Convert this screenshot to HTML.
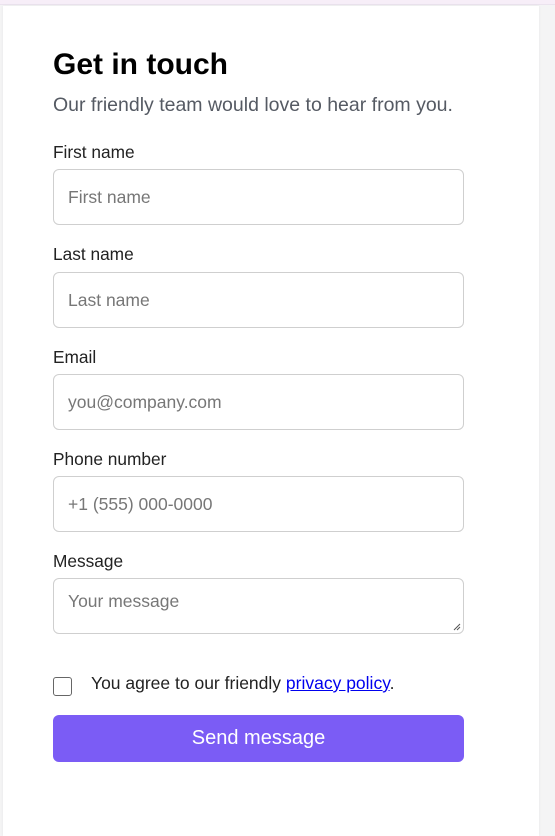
<!DOCTYPE html>
<html><head><style>
*{box-sizing:border-box;margin:0;padding:0}
body{width:555px;height:827px;background:#f4f4f5;font-family:"Liberation Sans",Arial,sans-serif;position:relative;overflow:hidden}
.top{position:absolute;left:0;top:0;width:555px;height:5px;background:#f7eef8;border-bottom:1px solid #ebe3ee}
.card{position:absolute;left:3px;top:6px;width:536px;height:830px;background:#fff;box-shadow:0 0 3px rgba(0,0,0,.06)}
.a{position:absolute;left:53px;white-space:nowrap}
h1{font-size:30px;font-weight:bold;color:#000;top:48px}
.sub{font-size:19.5px;color:#555a63;top:94px}
.lab{font-size:17.3px;color:#222}
.in{width:411px;height:56px;border:1px solid #cfcfcf;border-radius:6px;font-size:17.5px;color:#777;padding-left:14px;line-height:54px}
.btn{width:411px;height:47px;background:#7b5cf5;border-radius:6px;color:#fff;font-size:20px;text-align:center;line-height:47px}
.cb{width:19px;height:19px;border:1.5px solid #666;border-radius:3px}
</style></head><body>
<div class="top"></div>
<div class="card"></div>
<h1 class="a">Get in touch</h1>
<div class="a sub">Our friendly team would love to hear from you.</div>
<div class="a lab" style="top:142px">First name</div>
<div class="a in" style="top:169px">First name</div>
<div class="a lab" style="top:244px">Last name</div>
<div class="a in" style="top:272px">Last name</div>
<div class="a lab" style="top:347px">Email</div>
<div class="a in" style="top:374px">you@company.com</div>
<div class="a lab" style="top:449px">Phone number</div>
<div class="a in" style="top:476px">+1 (555) 000-0000</div>
<div class="a lab" style="top:551px">Message</div>
<div class="a in" style="top:578px;line-height:1;padding-top:14px">Your message
<svg style="position:absolute;right:2px;bottom:2px" width="9" height="9"><path d="M8 2L2 8M8 5L5 8" stroke="#555" stroke-width="1"/></svg></div>
<div class="a cb" style="top:677px"></div>
<div class="a" style="left:91px;top:673px;font-size:17.5px;color:#222">You agree to our friendly <span style="color:#00e;text-decoration:underline">privacy policy</span>.</div>
<div class="a btn" style="top:715px">Send message</div>
</body></html>
